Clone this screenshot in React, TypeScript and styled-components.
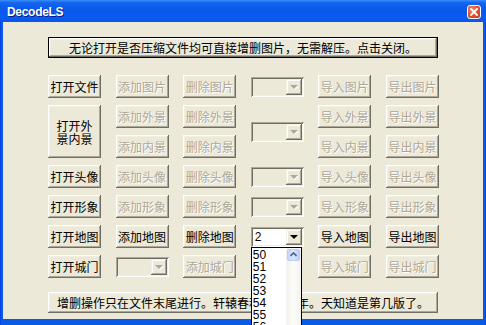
import styled, { createGlobalStyle } from 'styled-components'

const GlobalStyle = createGlobalStyle`
  html, body {
    margin: 0;
    padding: 0;
    background: #ece9d8;
  }
  body {
    font-family: "Noto Sans CJK SC", "Liberation Sans", sans-serif;
  }
`

type Cell = { $col: number; $row: number; $span?: number }

const rows = [
  { label: '头像', row: 4 },
  { label: '形象', row: 5 },
]

function App() {
  return (
    <>
      <GlobalStyle />
      <Window>
        <TitleBar>
          <Title>DecodeLS</Title>
          <CloseButton>
            <svg width="8" height="8" viewBox="0 0 8 8">
              <path d="M1 1 L7 7 M7 1 L1 7" stroke="#fff" strokeWidth="1.8" strokeLinecap="square" />
            </svg>
          </CloseButton>
        </TitleBar>
        <Frame>
          <Body>
            <Banner $default>无论打开是否压缩文件均可直接增删图片，无需解压。点击关闭。</Banner>
            <Grid>
              {/* 图片 */}
              <Btn $col={1} $row={1}>打开文件</Btn>
              <Btn $col={2} $row={1} disabled>添加图片</Btn>
              <Btn $col={3} $row={1} disabled>删除图片</Btn>
              <ComboBox col={4} row={1} />
              <Btn $col={5} $row={1} disabled>导入图片</Btn>
              <Btn $col={6} $row={1} disabled>导出图片</Btn>

              {/* 外景 / 内景 */}
              <Btn $col={1} $row={2} $span={2}>打开外<br />景内景</Btn>
              <Btn $col={2} $row={2} disabled>添加外景</Btn>
              <Btn $col={3} $row={2} disabled>删除外景</Btn>
              <ComboBox col={4} row={2} span={2} />
              <Btn $col={5} $row={2} disabled>导入外景</Btn>
              <Btn $col={6} $row={2} disabled>导出外景</Btn>
              <Btn $col={2} $row={3} disabled>添加内景</Btn>
              <Btn $col={3} $row={3} disabled>删除内景</Btn>
              <Btn $col={5} $row={3} disabled>导入内景</Btn>
              <Btn $col={6} $row={3} disabled>导出内景</Btn>

              {rows.map(r => (
                <Row key={r.label} label={r.label} row={r.row} />
              ))}

              {/* 地图 */}
              <Btn $col={1} $row={6}>打开地图</Btn>
              <Btn $col={2} $row={6}>添加地图</Btn>
              <Btn $col={3} $row={6}>删除地图</Btn>
              <ComboBox col={4} row={6} value="2" enabled open />
              <Btn $col={5} $row={6}>导入地图</Btn>
              <Btn $col={6} $row={6}>导出地图</Btn>

              {/* 城门 */}
              <Btn $col={1} $row={7}>打开城门</Btn>
              <ComboBox col={2} row={7} />
              <Btn $col={3} $row={7} disabled>添加城门</Btn>
              <Btn $col={5} $row={7} disabled>导入城门</Btn>
              <Btn $col={6} $row={7} disabled>导出城门</Btn>
            </Grid>
            <Banner>增删操作只在文件末尾进行。轩辕春秋改版多年。天知道是第几版了。</Banner>
          </Body>
        </Frame>
      </Window>
    </>
  )
}

function Row({ label, row }: { label: string; row: number }) {
  return (
    <>
      <Btn $col={1} $row={row}>打开{label}</Btn>
      <Btn $col={2} $row={row} disabled>添加{label}</Btn>
      <Btn $col={3} $row={row} disabled>删除{label}</Btn>
      <ComboBox col={4} row={row} />
      <Btn $col={5} $row={row} disabled>导入{label}</Btn>
      <Btn $col={6} $row={row} disabled>导出{label}</Btn>
    </>
  )
}

function ComboBox({ col, row, span, value, enabled, open }: {
  col: number; row: number; span?: number; value?: string; enabled?: boolean; open?: boolean
}) {
  return (
    <Combo $col={col} $row={row} $span={span} $enabled={enabled}>
      <ComboText>{value}</ComboText>
      <ArrowBtn>
        <Triangle $enabled={enabled} />
      </ArrowBtn>
      {open && (
        <DropList>
          <Items>
            {['50', '51', '52', '53', '54', '55', '56'].map(v => (
              <Item key={v}>{v}</Item>
            ))}
          </Items>
          <ScrollBar>
            <ScrollUp>
              <svg width="7" height="5" viewBox="0 0 7 5">
                <path d="M0.5 4 L3.5 1 L6.5 4" stroke="#4d6185" strokeWidth="1.6" fill="none" />
              </svg>
            </ScrollUp>
          </ScrollBar>
        </DropList>
      )}
    </Combo>
  )
}

export default App

const Window = styled.div`
  width: 486px;
  height: 325px;
  display: flex;
  flex-direction: column;
  overflow: hidden;
  position: relative;
  background: #0b4fe0;
`

const TitleBar = styled.div`
  flex: none;
  height: 22px;
  box-sizing: border-box;
  padding: 2px 5px 0 7px;
  display: flex;
  align-items: center;
  justify-content: space-between;
  background: linear-gradient(180deg, #3b8dfb 0%, #1466ef 12%, #0858ea 45%, #0a5bef 80%, #0b55e6 100%);
`

const Title = styled.div`
  color: #fff;
  font: bold 12px "Liberation Sans", sans-serif;
  letter-spacing: -0.3px;
  text-shadow: 1px 1px 0 #0a1a8a;
  margin-top: -1px;
`

const CloseButton = styled.div`
  width: 14px;
  height: 14px;
  box-sizing: border-box;
  border: 1px solid #fff;
  border-radius: 3px;
  background: radial-gradient(circle at 35% 30%, #f0906f 0%, #e0553a 45%, #c8371a 100%);
  display: flex;
  align-items: center;
  justify-content: center;
`

const Frame = styled.div`
  flex: 1;
  display: flex;
  padding: 0 3px 6px 3px;
  background: linear-gradient(90deg, #0831d9 0, #0a5ae8 1px, #0a5ae8 485px, #0831d9 486px);
`

const Body = styled.div`
  flex: 1;
  display: flex;
  flex-direction: column;
  align-items: flex-start;
  padding: 15px 0 0 45px;
  background: #ece9d8;
`

const Banner = styled.div<{ $default?: boolean }>`
  width: 390px;
  height: 21px;
  box-sizing: border-box;
  display: flex;
  align-items: center;
  justify-content: center;
  font-size: 12px;
  color: #000;
  background: #ece9d8;
  margin-bottom: ${p => (p.$default ? '17px' : '0')};
  margin-top: ${p => (p.$default ? '0' : '14px')};
  border: ${p => (p.$default ? '1px solid #000' : 'none')};
  box-shadow: inset -1px -1px #716f64, inset 1px 1px #fff, inset -2px -2px #aca899, inset 2px 2px #f1efe2;
  white-space: nowrap;
`

const Grid = styled.div`
  display: grid;
  grid-template-columns: repeat(6, 53px);
  column-gap: 14.6px;
  grid-template-rows: repeat(7, 23px);
  row-gap: 7px;
`

const Btn = styled.button<Cell>`
  grid-column: ${p => p.$col};
  grid-row: ${p => p.$row} / span ${p => p.$span ?? 1};
  margin: 0;
  padding: 0;
  border: none;
  background: #ece9d8;
  box-shadow: inset -1px -1px #716f64, inset 1px 1px #fff, inset -2px -2px #aca899, inset 2px 2px #f1efe2;
  font-family: "Noto Sans CJK SC", sans-serif;
  font-size: 12px;
  line-height: 13px;
  color: #000;
  white-space: nowrap;

  &:disabled {
    color: #aca899;
    text-shadow: 1px 1px 0 #fff;
  }
`

const Combo = styled.div<Cell & { $enabled?: boolean }>`
  grid-column: ${p => p.$col};
  grid-row: ${p => p.$row} / span ${p => p.$span ?? 1};
  align-self: center;
  height: 20px;
  box-sizing: border-box;
  padding: 2px;
  position: relative;
  display: flex;
  background: ${p => (p.$enabled ? '#fff' : '#ece9d8')};
  box-shadow: inset 1px 1px #aca899, inset -1px -1px #fff, inset 2px 2px #716f64, inset -2px -2px #f1efe2;
`

const ComboText = styled.div`
  flex: 1;
  font: 12px/16px "Liberation Sans", sans-serif;
  padding-left: 2px;
  color: #000;
`

const ArrowBtn = styled.div`
  width: 16px;
  height: 16px;
  box-sizing: border-box;
  display: flex;
  align-items: center;
  justify-content: center;
  background: #ece9d8;
  box-shadow: inset -1px -1px #716f64, inset 1px 1px #f1efe2, inset -2px -2px #aca899, inset 2px 2px #fff;
`

const Triangle = styled.div<{ $enabled?: boolean }>`
  width: 0;
  height: 0;
  margin-top: 1px;
  border-left: 4px solid transparent;
  border-right: 4px solid transparent;
  border-top: 4px solid ${p => (p.$enabled ? '#000' : '#aca899')};
  filter: ${p => (p.$enabled ? 'none' : 'drop-shadow(1px 1px 0 #fff)')};
`

const DropList = styled.div`
  position: absolute;
  top: 100%;
  left: 0;
  width: 51px;
  height: 92px;
  box-sizing: border-box;
  border: 1px solid #000;
  background: #fff;
  z-index: 10;
  display: flex;
`

const Items = styled.div`
  flex: 1;
  padding: 1px 0 0 1px;
`

const Item = styled.div`
  font: 12px/12px "Liberation Sans", sans-serif;
  color: #000;
  height: 12px;
`

const ScrollBar = styled.div`
  width: 15px;
  padding: 1px 1px 0 1px;
  box-sizing: border-box;
  background: linear-gradient(90deg, #f3f1ec 0%, #fdfdfa 50%, #f3f1ec 100%);
`

const ScrollUp = styled.div`
  height: 12px;
  box-sizing: border-box;
  border: 1px solid #b9ccf5;
  border-radius: 2px;
  background: linear-gradient(90deg, #c8d6fb 0%, #dbe5fd 50%, #bccdf9 100%);
  display: flex;
  align-items: center;
  justify-content: center;
`
